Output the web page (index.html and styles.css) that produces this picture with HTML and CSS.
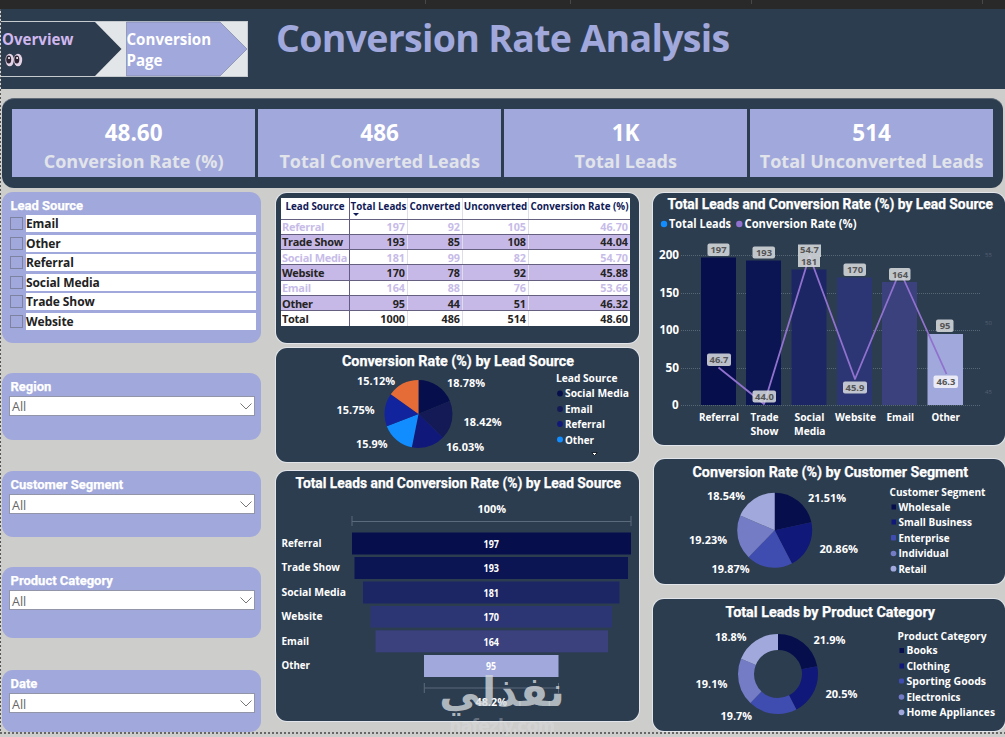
FILE: index.html
```html
<!DOCTYPE html>
<html lang="en">
<head>
<meta charset="utf-8">
<title>Conversion Rate Analysis</title>
<link rel="stylesheet" href="styles.css">
</head>
<body>
<div class="topstrip"><i></i><i></i><i></i><i></i></div>
<header class="header">
  <nav class="nav">
    <svg class="nav-shapes" width="248" height="56" viewBox="0 21 248 56">
      <rect x="0" y="21.5" width="247.5" height="55" fill="#e3e6e8" stroke="#c5cbcf"/>
      <path d="M0 22H95L121.500 49L95 76H0Z" fill="#2d3c4f"/>
      <path d="M126.500 22H220L247 49L220 76H126.500Z" fill="#a1a8db" stroke="#7f86a8" stroke-width=".7"/>
    </svg>
    <a class="nav-item overview">Overview
      <svg class="eyes" width="18" height="14" viewBox="0 0 18 14"><ellipse cx="4.700" cy="7" rx="4.200" ry="6.300" fill="#e4d3e4"/><ellipse cx="13" cy="7" rx="4.200" ry="6.300" fill="#e4d3e4"/><ellipse cx="3.700" cy="6.500" rx="2.500" ry="3.900" fill="#2c2433"/><ellipse cx="11.800" cy="6.500" rx="2.500" ry="3.900" fill="#2c2433"/><circle cx="4" cy="5" r="1" fill="#fff"/><circle cx="12.100" cy="5" r="1" fill="#fff"/></svg>
    </a>
    <a class="nav-item current">Conversion<br>Page</a>
  </nav>
  <h1 class="page-title">Conversion Rate Analysis</h1>
</header>

<section class="kpis">
  <div class="kpi"><b>48.60</b><span>Conversion Rate (%)</span></div>
  <div class="kpi"><b>486</b><span>Total Converted Leads</span></div>
  <div class="kpi"><b>1K</b><span>Total Leads</span></div>
  <div class="kpi"><b>514</b><span>Total Unconverted Leads</span></div>
</section>

<main class="board">
  <div class="filters">
    <section class="slicer slicer-list">
      <h2>Lead Source</h2>
      <label><i></i><span>Email</span></label>
      <label><i></i><span>Other</span></label>
      <label><i></i><span>Referral</span></label>
      <label><i></i><span>Social Media</span></label>
      <label><i></i><span>Trade Show</span></label>
      <label><i></i><span>Website</span></label>
    </section>
    <section class="slicer region"><h2>Region</h2><div class="select">All<svg width="12" height="7"><path d="M.5.500L6 6L11.500.500"/></svg></div></section>
    <section class="slicer segment"><h2>Customer Segment</h2><div class="select">All<svg width="12" height="7"><path d="M.5.500L6 6L11.500.500"/></svg></div></section>
    <section class="slicer product"><h2>Product Category</h2><div class="select">All<svg width="12" height="7"><path d="M.5.500L6 6L11.500.500"/></svg></div></section>
    <section class="slicer date"><h2>Date</h2><div class="select">All<svg width="12" height="7"><path d="M.5.500L6 6L11.500.500"/></svg></div></section>
  </div>

  <div class="middle">
    <section class="card table-card">
      <table>
        <colgroup><col class="c1"><col class="c2"><col class="c3"><col class="c4"><col class="c5"></colgroup>
        <thead><tr><th>Lead Source</th><th class="sorted">Total Leads</th><th>Converted</th><th>Unconverted</th><th>Conversion Rate (%)</th></tr></thead>
        <tbody>
          <tr><td>Referral</td><td>197</td><td>92</td><td>105</td><td>46.70</td></tr>
          <tr><td>Trade Show</td><td>193</td><td>85</td><td>108</td><td>44.04</td></tr>
          <tr><td>Social Media</td><td>181</td><td>99</td><td>82</td><td>54.70</td></tr>
          <tr><td>Website</td><td>170</td><td>78</td><td>92</td><td>45.88</td></tr>
          <tr><td>Email</td><td>164</td><td>88</td><td>76</td><td>53.66</td></tr>
          <tr><td>Other</td><td>95</td><td>44</td><td>51</td><td>46.32</td></tr>
          <tr class="total"><td>Total</td><td>1000</td><td>486</td><td>514</td><td>48.60</td></tr>
        </tbody>
      </table>
    </section>

    <section class="card pie-card">
      <svg width="364" height="115" viewBox="275 348 364 115">
        <text class="title" x="342" y="366" textLength="232" lengthAdjust="spacingAndGlyphs">Conversion Rate (%) by Lead Source</text>
        <g class="pie" transform="rotate(-90 418.500 414)" stroke-width="34">
          <circle cx="418.500" cy="414" r="17" pathLength="100" stroke="#060f4c" stroke-dasharray="18.78 100"/>
          <circle cx="418.500" cy="414" r="17" pathLength="100" stroke="#131a55" stroke-dasharray="18.42 100" stroke-dashoffset="-18.78"/>
          <circle cx="418.500" cy="414" r="17" pathLength="100" stroke="#10187a" stroke-dasharray="16.03 100" stroke-dashoffset="-37.2"/>
          <circle cx="418.500" cy="414" r="17" pathLength="100" stroke="#118dff" stroke-dasharray="15.9 100" stroke-dashoffset="-53.23"/>
          <circle cx="418.500" cy="414" r="17" pathLength="100" stroke="#12239e" stroke-dasharray="15.75 100" stroke-dashoffset="-69.13"/>
          <circle cx="418.500" cy="414" r="17" pathLength="100" stroke="#e66c37" stroke-dasharray="15.12 100" stroke-dashoffset="-84.88"/>
        </g>
        <text x="447" y="387" textLength="38" lengthAdjust="spacingAndGlyphs">18.78%</text>
        <text x="463.500" y="426" textLength="38" lengthAdjust="spacingAndGlyphs">18.42%</text>
        <text x="446" y="451" textLength="38" lengthAdjust="spacingAndGlyphs">16.03%</text>
        <text x="356" y="448" textLength="31.500" lengthAdjust="spacingAndGlyphs">15.9%</text>
        <text x="336.500" y="414" textLength="38" lengthAdjust="spacingAndGlyphs">15.75%</text>
        <text x="357" y="385" textLength="38" lengthAdjust="spacingAndGlyphs">15.12%</text>
        <text x="556" y="382" textLength="61.500" lengthAdjust="spacingAndGlyphs">Lead Source</text>
        <text x="565" y="397" textLength="64" lengthAdjust="spacingAndGlyphs">Social Media</text>
        <text x="565" y="413" textLength="27.500" lengthAdjust="spacingAndGlyphs">Email</text>
        <text x="565" y="428" textLength="40" lengthAdjust="spacingAndGlyphs">Referral</text>
        <text x="565" y="444" textLength="29" lengthAdjust="spacingAndGlyphs">Other</text>
        <circle cx="560" cy="393.500" r="2.900" fill="#060f4c"/><circle cx="560" cy="409" r="2.900" fill="#131a55"/><circle cx="560" cy="424" r="2.900" fill="#10187a"/><circle cx="560" cy="439.500" r="3" fill="#118dff"/>
        <path d="M591.500 452.500H597.500L594.500 455.500Z" fill="#fff" stroke="#17202b" stroke-width="1"/>
      </svg>
    </section>

    <section class="card funnel-card">
      <svg width="364" height="251" viewBox="275 471 364 251">
        <text class="title" x="295.500" y="488" textLength="325.500" lengthAdjust="spacingAndGlyphs">Total Leads and Conversion Rate (%) by Lead Source</text>
        <g class="bracket"><path d="M352 516V526M352 521.500H631M631 516V526"/><path d="M424.300 683V693M424.300 688H558.500M558.500 683V693"/></g>
        <rect x="352" y="532.500" width="279" height="22" fill="#060f4c"/>
        <rect x="354.500" y="557" width="273.500" height="22" fill="#0b1553"/>
        <rect x="363" y="581.500" width="256.500" height="22" fill="#1d2664"/>
        <rect x="370.500" y="606" width="241.500" height="21.500" fill="#2d3674"/>
        <rect x="375.500" y="630.300" width="232.500" height="22" fill="#3a417c"/>
        <rect x="424" y="655" width="134.500" height="22" fill="#a1a8db"/>
        <text x="477.500" y="513" textLength="28.500" lengthAdjust="spacingAndGlyphs">100%</text>
        <text x="281.500" y="547" textLength="40" lengthAdjust="spacingAndGlyphs">Referral</text>
        <text x="281.500" y="571" textLength="58.500" lengthAdjust="spacingAndGlyphs">Trade Show</text>
        <text x="281.500" y="596" textLength="64.500" lengthAdjust="spacingAndGlyphs">Social Media</text>
        <text x="281.500" y="620" textLength="41" lengthAdjust="spacingAndGlyphs">Website</text>
        <text x="281.500" y="645" textLength="27.500" lengthAdjust="spacingAndGlyphs">Email</text>
        <text x="281.500" y="669" textLength="28.500" lengthAdjust="spacingAndGlyphs">Other</text>
        <g class="small">
          <text x="483.500" y="547.500" textLength="15.500" lengthAdjust="spacingAndGlyphs">197</text>
          <text x="483.500" y="572" textLength="15.500" lengthAdjust="spacingAndGlyphs">193</text>
          <text x="483.500" y="596.500" textLength="15.500" lengthAdjust="spacingAndGlyphs">181</text>
          <text x="483.500" y="621" textLength="15.500" lengthAdjust="spacingAndGlyphs">170</text>
          <text x="483.500" y="645.500" textLength="15.500" lengthAdjust="spacingAndGlyphs">164</text>
          <text x="486" y="670" textLength="10" lengthAdjust="spacingAndGlyphs">95</text>
        </g>
        <text x="475.500" y="706" textLength="31.500" lengthAdjust="spacingAndGlyphs">48.2%</text>
      </svg>
    </section>
  </div>

  <div class="right">
    <section class="card combo-card">
      <svg width="352" height="253" viewBox="653 193 352 253">
        <text class="title" x="667.500" y="209" textLength="325.500" lengthAdjust="spacingAndGlyphs">Total Leads and Conversion Rate (%) by Lead Source</text>
        <circle cx="664" cy="224" r="3.200" fill="#118dff"/><text class="legend" x="669" y="228" textLength="62" lengthAdjust="spacingAndGlyphs">Total Leads</text>
        <circle cx="739.300" cy="224" r="3.200" fill="#9071ce"/><text class="legend" x="744.500" y="228" textLength="112" lengthAdjust="spacingAndGlyphs">Conversion Rate (%)</text>
        <g class="grid"><path d="M681 255.500H981M681 293.500H981M681 330.500H981M681 368.500H981M681 405.500H981"/></g>
        <g class="axis"><text x="659" y="259" textLength="20" lengthAdjust="spacingAndGlyphs">200</text><text x="659.500" y="297" textLength="19.500" lengthAdjust="spacingAndGlyphs">150</text><text x="659.500" y="334" textLength="19.500" lengthAdjust="spacingAndGlyphs">100</text><text x="665.500" y="372" textLength="13.500" lengthAdjust="spacingAndGlyphs">50</text><text x="672" y="409" textLength="7">0</text></g>
        <g class="faint"><text x="985" y="257">55</text><text x="985" y="325">50</text><text x="985" y="394">45</text></g>
        <rect x="701" y="257.500" width="35" height="147.500" fill="#060f4c"/>
        <rect x="746" y="260.500" width="35" height="144.500" fill="#0b1553"/>
        <rect x="791.500" y="269.500" width="35" height="135.500" fill="#1d2664"/>
        <rect x="837" y="277.500" width="35" height="127.500" fill="#2d3674"/>
        <rect x="882" y="282" width="35" height="123" fill="#3a417c"/>
        <rect x="927.500" y="334" width="35.500" height="71" fill="#a1a8db"/>
        <polyline points="718.5,367.5 764,404 809.5,256 855,379 900,271 946.5,374" fill="none" stroke="#9071ce" stroke-width="1.800" stroke-linejoin="round"/>
        <g class="tags">
          <rect x="707.500" y="243.500" width="22" height="12.500" rx="2"/><rect x="752.500" y="246.500" width="22.500" height="12" rx="2"/><path d="M798 244.500H821V257H820V267H798Z"/><rect x="843.500" y="263.500" width="22.500" height="12.500" rx="2"/><rect x="889" y="268" width="21.500" height="12.500" rx="2"/><rect x="936" y="319.500" width="17.500" height="12.500" rx="2"/><rect x="707" y="353.500" width="24" height="12.500" rx="2"/><rect x="752.500" y="390.500" width="23.500" height="12" rx="2"/><rect x="843" y="381.500" width="24" height="12" rx="2"/><rect x="933.500" y="375.500" width="24.500" height="12.500" rx="2" fill="#f3f3f8"/>
        </g>
        <g class="tag-text">
          <text x="718.500" y="253">197</text><text x="764" y="256">193</text><text x="809.500" y="253">54.7</text><text x="809" y="265">181</text><text x="855" y="273">170</text><text x="900" y="277.500">164</text><text x="945" y="329">95</text><text x="719" y="363">46.7</text><text x="764.500" y="400">44.0</text><text x="855" y="391">45.9</text><text x="946" y="385">46.3</text>
        </g>
        <text x="699" y="421" textLength="40" lengthAdjust="spacingAndGlyphs">Referral</text>
        <text x="750.500" y="421" textLength="28" lengthAdjust="spacingAndGlyphs">Trade</text><text x="750.500" y="435" textLength="28" lengthAdjust="spacingAndGlyphs">Show</text>
        <text x="794.500" y="421" textLength="30" lengthAdjust="spacingAndGlyphs">Social</text><text x="794" y="435" textLength="31.500" lengthAdjust="spacingAndGlyphs">Media</text>
        <text x="835" y="421" textLength="41" lengthAdjust="spacingAndGlyphs">Website</text>
        <text x="886.500" y="421" textLength="27.500" lengthAdjust="spacingAndGlyphs">Email</text>
        <text x="931.500" y="421" textLength="28.500" lengthAdjust="spacingAndGlyphs">Other</text>
      </svg>
    </section>

    <section class="card segment-card">
      <svg width="351" height="126" viewBox="654 459 351 126">
        <text class="title" x="692.500" y="477" textLength="275.500" lengthAdjust="spacingAndGlyphs">Conversion Rate (%) by Customer Segment</text>
        <g class="pie" transform="rotate(-90 774.7 530.3)" stroke-width="37.500">
          <circle cx="774.700" cy="530.300" r="18.750" pathLength="100" stroke="#060f4c" stroke-dasharray="21.51 100"/>
          <circle cx="774.700" cy="530.300" r="18.750" pathLength="100" stroke="#10187a" stroke-dasharray="20.86 100" stroke-dashoffset="-21.51"/>
          <circle cx="774.700" cy="530.300" r="18.750" pathLength="100" stroke="#404db0" stroke-dasharray="19.87 100" stroke-dashoffset="-42.37"/>
          <circle cx="774.700" cy="530.300" r="18.750" pathLength="100" stroke="#747cc5" stroke-dasharray="19.23 100" stroke-dashoffset="-62.24"/>
          <circle cx="774.700" cy="530.300" r="18.750" pathLength="100" stroke="#a1a8db" stroke-dasharray="18.54 100" stroke-dashoffset="-81.47"/>
        </g>
        <text x="808" y="502" textLength="38" lengthAdjust="spacingAndGlyphs">21.51%</text>
        <text x="819.500" y="553" textLength="38.500" lengthAdjust="spacingAndGlyphs">20.86%</text>
        <text x="711.500" y="573" textLength="38" lengthAdjust="spacingAndGlyphs">19.87%</text>
        <text x="689" y="544" textLength="38" lengthAdjust="spacingAndGlyphs">19.23%</text>
        <text x="707" y="500" textLength="38" lengthAdjust="spacingAndGlyphs">18.54%</text>
        <text x="889.500" y="496" textLength="96" lengthAdjust="spacingAndGlyphs">Customer Segment</text>
        <text x="898.500" y="511" textLength="52" lengthAdjust="spacingAndGlyphs">Wholesale</text>
        <text x="898.500" y="526" textLength="73.500" lengthAdjust="spacingAndGlyphs">Small Business</text>
        <text x="898.500" y="542" textLength="51" lengthAdjust="spacingAndGlyphs">Enterprise</text>
        <text x="898.500" y="557" textLength="50" lengthAdjust="spacingAndGlyphs">Individual</text>
        <text x="898.500" y="573" textLength="28" lengthAdjust="spacingAndGlyphs">Retail</text>
        <rect x="891.500" y="504.500" width="4.500" height="5" fill="#060f4c"/><rect x="891.500" y="519.500" width="4.500" height="5" fill="#10187a"/><rect x="891" y="535" width="5" height="5.500" fill="#404db0" rx="1"/><circle cx="893.500" cy="553.500" r="2.800" fill="#747cc5"/><circle cx="893.500" cy="568.700" r="2.900" fill="#a1a8db"/>
      </svg>
    </section>

    <section class="card category-card">
      <svg width="352" height="133" viewBox="653 599 352 133">
        <text class="title" x="725.500" y="617" textLength="209.500" lengthAdjust="spacingAndGlyphs">Total Leads by Product Category</text>
        <g class="pie" transform="rotate(-90 778 674)" stroke-width="16">
          <circle cx="778" cy="674" r="32" pathLength="100" stroke="#060f4c" stroke-dasharray="21.9 100"/>
          <circle cx="778" cy="674" r="32" pathLength="100" stroke="#10187a" stroke-dasharray="20.5 100" stroke-dashoffset="-21.9"/>
          <circle cx="778" cy="674" r="32" pathLength="100" stroke="#404db0" stroke-dasharray="19.7 100" stroke-dashoffset="-42.4"/>
          <circle cx="778" cy="674" r="32" pathLength="100" stroke="#747cc5" stroke-dasharray="19.1 100" stroke-dashoffset="-62.1"/>
          <circle cx="778" cy="674" r="32" pathLength="100" stroke="#a1a8db" stroke-dasharray="18.8 100" stroke-dashoffset="-81.2"/>
        </g>
        <text x="813.500" y="644" textLength="32" lengthAdjust="spacingAndGlyphs">21.9%</text>
        <text x="825.500" y="698" textLength="32" lengthAdjust="spacingAndGlyphs">20.5%</text>
        <text x="720.500" y="720" textLength="31.500" lengthAdjust="spacingAndGlyphs">19.7%</text>
        <text x="695.500" y="688" textLength="32" lengthAdjust="spacingAndGlyphs">19.1%</text>
        <text x="715" y="641" textLength="31.500" lengthAdjust="spacingAndGlyphs">18.8%</text>
        <text x="897.500" y="640" textLength="89" lengthAdjust="spacingAndGlyphs">Product Category</text>
        <text x="906.500" y="654" textLength="31" lengthAdjust="spacingAndGlyphs">Books</text>
        <text x="906.500" y="670" textLength="43" lengthAdjust="spacingAndGlyphs">Clothing</text>
        <text x="906.500" y="685" textLength="79.500" lengthAdjust="spacingAndGlyphs">Sporting Goods</text>
        <text x="906.500" y="701" textLength="54" lengthAdjust="spacingAndGlyphs">Electronics</text>
        <text x="906.500" y="716" textLength="88.500" lengthAdjust="spacingAndGlyphs">Home Appliances</text>
        <rect x="899.500" y="648" width="4.500" height="5" fill="#060f4c"/><rect x="899.500" y="663.500" width="4.500" height="5" fill="#10187a"/><rect x="899" y="678.500" width="5" height="5" rx="1.500" fill="#404db0"/><circle cx="901.500" cy="697" r="2.800" fill="#747cc5"/><circle cx="901.500" cy="712.300" r="2.900" fill="#a1a8db"/>
      </svg>
    </section>
  </div>
</main>
<div class="edge-left"></div>
<div class="edge-bottom"></div>
<div class="watermark"><div class="mark" lang="ar" dir="rtl">نفذلي</div><div class="site">nafezly.com</div></div>
</body>
</html>
```
FILE: styles.css
```css
* { box-sizing: border-box; }
body {
  margin: 0;
  width: 1005px;
  height: 737px;
  overflow: hidden;
  position: relative;
  background: #cdcdcc;
  font-family: "Open Sans", "Noto Sans", sans-serif;
  color: #fff;
}
svg { display: block; }

.topstrip { height: 9px; background: #292929; display: grid; grid-template-columns: 426px 145px 181px 231px; }
.topstrip i { height: 4px; border-right: 1px solid #484848; }
.header { height: 80px; background: #2d3d50; display: flex; padding-top: 12px; }
.nav { position: relative; width: 248px; height: 56px; display: flex; flex: none; }
.nav-shapes { position: absolute; left: 0; top: 0; }
.nav-item { position: relative; font-weight: 700; font-size: 15.1px; line-height: 21px; padding: 8px 0 0 2px; width: 126px; }
.overview { color: #d0b8ee; }
.eyes { margin: 3px 0 0 3px; }
.current { padding-left: 2.500px; }
.page-title { margin: -12px 0 0 28px; font-size: 37.500px; line-height: 58px; font-weight: 700; letter-spacing: -.7px; color: #a1a8db; white-space: nowrap; }

.kpis {
  margin: 9px 2px 0;
  height: 90px;
  border-radius: 12px;
  background: #2d3d50;
  border-top: 1px solid #5f6c78;
  padding: 10px 10px 0 10.400px;
  display: grid;
  grid-template-columns: repeat(4, 242.500px);
  gap: 3.500px;
}
.kpi { height: 68px; background: #a1a8db; text-align: center; padding-top: 9px; white-space: nowrap; }
.kpi b, .kpi span { display: block; }
.kpi b { font-size: 22.500px; line-height: 29px; font-weight: 700; }
.kpi span { font-size: 18px; line-height: 28px; font-weight: 700; color: #e1e4ea; }

.board { display: grid; grid-template-columns: 259px 364px 352px; column-gap: 14px; padding: 4px 0 0 2px; }
.filters, .middle, .right { display: flex; flex-direction: column; }

.slicer { background: #a1a8db; border-radius: 11px; padding: 6px 7px 0; height: 66px; width: 259px; flex: none; }
.slicer h2 { margin: 0 0 0 1.500px; font: 700 13px/16px Roboto, sans-serif; white-space: nowrap; -webkit-text-stroke: .25px #fff; }
.slicer-list { height: 151px; padding-top: 5px; }
.slicer-list h2 { margin-bottom: 1px; line-height: 17px; }
.slicer-list label { display: flex; justify-content: space-between; height: 19.600px; width: 247px; }
.slicer-list label i { width: 13px; height: 13px; border: 1px solid #7d839f; margin: 2px 0 0 1px; }
.slicer-list label span { width: 230.500px; height: 17px; background: #fff; color: #222; font-size: 12px; line-height: 17px; font-weight: 700; letter-spacing: -.1px; padding-left: .5px; }
.region { margin-top: 30px; height: 67px; }
.segment { margin-top: 31px; }
.product { margin-top: 30px; height: 71px; }
.date { margin-top: 32px; height: 62px; }
.select { width: 246px; height: 20px; background: #fff; border: 1px solid #9295a8; color: #666; font-size: 12.500px; line-height: 21px; padding: 0 2px 0 2px; margin-top: 1px; display: flex; justify-content: space-between; align-items: flex-start; }
.region .select { line-height: 20px; }
.select svg { margin-top: 6px; fill: none; stroke: #777; stroke-width: 1; }

.card { background: #2d3d50; border-radius: 11px; box-shadow: 0 0 0 1px #e2e6ea; flex: none; overflow: hidden; }
.middle .card { width: 363px; margin-left: 1px; }
.middle .card svg { margin-left: -1px; }
.middle .table-card { height: 150px; padding: 5px 0 0 5px; margin-top: 1px; }
.pie-card { height: 114px; margin-top: 5px; }
.funnel-card { height: 250px; margin-top: 9px; }
.right .card { width: 352px; }
.combo-card { height: 252px; margin-top: 1px; }
.right .segment-card { height: 125px; width: 351px; margin: 14px 0 0 1px; }
.category-card { height: 132px; margin-top: 15px; }

table { border-collapse: collapse; table-layout: fixed; width: 349px; height: 128px; background: #fff; font-size: 10.800px; line-height: 13px; font-weight: 700; }
.c1 { width: 68.500px; } .c2 { width: 58px; } .c3 { width: 55px; } .c4 { width: 66px; } .c5 { width: 101.500px; }
th, td { padding: 0 2px 0 1px; text-align: right; white-space: nowrap; border-right: 1px solid #dedeea; border-bottom: 1px solid #656080; overflow: visible; }
th { height: 21px; vertical-align: top; color: #101a58; font-size: 9.800px; line-height: 17px; font-weight: 700; padding: 0; position: relative; text-align: center; }
th.sorted::after { content: ""; position: absolute; left: 3px; top: 15px; border: 3px solid transparent; border-top-color: #101a58; border-bottom: 0; }
td { height: 15.300px; color: #252423; }
th:first-child, td:first-child { border-right-color: #615c85; }
td:first-child { text-align: left; font-size: 11px; letter-spacing: -.3px; }
th:last-child, td:last-child { border-right: 0; }
tbody tr:nth-child(odd) td { color: #c7bce8; }
tbody tr:nth-child(even) td { background: #c6b9e8; }
tbody .total td { color: #252423 !important; border-bottom: 0; }

text { font: 700 11px "Open Sans", "Noto Sans", sans-serif; fill: #fff; }
.title { font: 700 14px Roboto, sans-serif; stroke: #fff; stroke-width: .25px; }
.legend { font-size: 12px; }
.axis text { font-size: 11.500px; }
.small text { font-size: 10px; }
.faint text { font-size: 6px; font-weight: 400; fill: #526070; }
.pie circle { fill: none; }
.bracket path { fill: none; stroke: #5b6b7b; stroke-width: 1; }
.grid path { fill: none; stroke: #586776; stroke-width: 1; stroke-dasharray: 1 1; }
.tags { fill: #d6d9dc; fill-opacity: .88; }
.tag-text text { font-size: 9.400px; fill: #555; text-anchor: middle; }

.edge-left { position: absolute; left: 0; top: 9px; width: 1px; height: 724px; background: repeating-linear-gradient(#555 0 2px, #d5d5d5 2px 4px); }
.edge-bottom { position: absolute; left: 0; top: 732px; width: 1005px; height: 2px; background: repeating-linear-gradient(90deg, #666 0 2px, transparent 2px 4px); }
.watermark { position: absolute; left: 432px; top: 668px; width: 140px; height: 69px; text-align: center; }
.mark { font: 700 41px/49px "DejaVu Sans", sans-serif; color: rgba(211, 216, 220, .78); white-space: nowrap; }
.site { font: 700 17px/18px "DejaVu Sans", sans-serif; color: rgba(225, 227, 228, .32); letter-spacing: -.8px; }
```
